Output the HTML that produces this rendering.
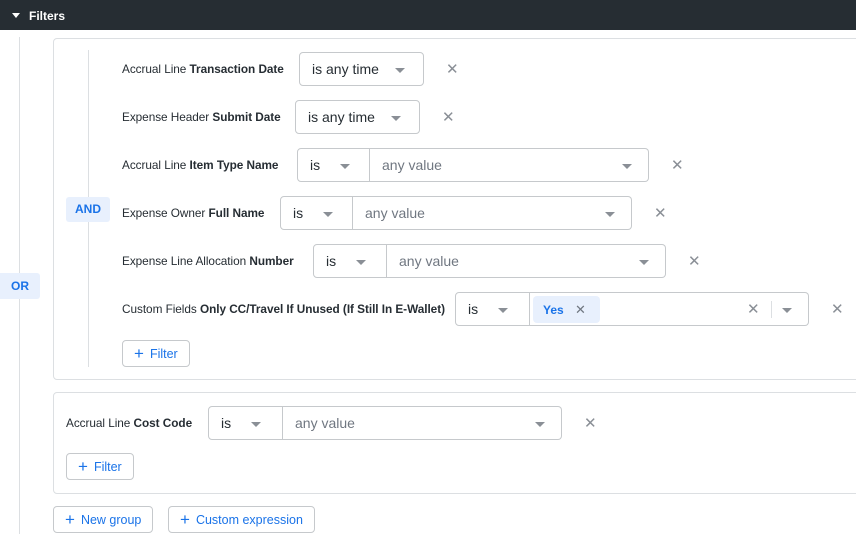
<!DOCTYPE html>
<html><head><style>
*{box-sizing:border-box;margin:0;padding:0}
body{width:856px;height:545px;background:#fff;font-family:"Liberation Sans",Arial,sans-serif;position:relative;overflow:hidden;color:#262d33}
.a{position:absolute}
.hdr{left:0;top:0;width:856px;height:30px;background:#262d33;color:#fff;font-weight:bold;font-size:12px}
.lbl{font-size:11.8px;color:#262d33;height:34px;line-height:35px;white-space:nowrap;letter-spacing:-0.05px}
.lbl b{font-weight:bold}
.box{border:1px solid #c6c9cc;height:34px;font-size:14px;line-height:32px;color:#262d33;padding-left:12px;background:#fff}
.l{border-radius:4px 0 0 4px}
.r{border-radius:0 4px 4px 0;border-left:none;color:#707781}
.f{border-radius:4px}
.car{position:absolute;top:15px;width:0;height:0;border-left:5px solid transparent;border-right:5px solid transparent;border-top:5px solid #8a8f96}
.x{font-size:15px;color:#8a8f96;line-height:36px;height:34px}
.btn{border:1px solid #c6c9cc;border-radius:4px;height:27px;line-height:25px;font-size:12.5px;color:#1a73e8;padding:0 11px;background:#fff;white-space:nowrap}
.btn span{font-size:17px;margin-right:6px;vertical-align:-1px}
.chip{background:#e8f0fd;color:#1a73e8;font-weight:bold;font-size:12px}
</style></head><body>
<div class="a hdr"><span class="a" style="left:12px;top:13px;border-left:4px solid transparent;border-right:4px solid transparent;border-top:5px solid #fff"></span><span class="a" style="left:29px;top:9px">Filters</span></div>
<div class="a" style="left:19px;top:37px;width:1px;height:497px;background:#dcdfe2"></div>
<div class="a chip" style="left:0;top:273px;width:40px;height:26px;line-height:26px;text-align:center;border-radius:0 3px 3px 0">OR</div>
<div class="a" style="left:53px;top:38px;width:820px;height:342px;border:1px solid #dcdfe2;border-radius:4px"></div>
<div class="a" style="left:88px;top:50px;width:1px;height:317px;background:#dcdfe2"></div>
<div class="a chip" style="left:66px;top:197px;width:44px;height:25px;line-height:25px;text-align:center;border-radius:3px">AND</div>

<div class="a lbl" style="left:122px;top:52px">Accrual Line <b>Transaction Date</b></div>
<div class="a box f" style="left:299px;top:52px;width:125px">is any time<i class="car" style="left:95px"></i></div>
<div class="a x" style="left:446px;top:52px">✕</div>

<div class="a lbl" style="left:122px;top:100px">Expense Header <b>Submit Date</b></div>
<div class="a box f" style="left:295px;top:100px;width:125px">is any time<i class="car" style="left:95px"></i></div>
<div class="a x" style="left:442px;top:100px">✕</div>

<div class="a lbl" style="left:122px;top:148px">Accrual Line <b>Item Type Name</b></div>
<div class="a box l" style="left:297px;top:148px;width:73px">is<i class="car" style="left:42px"></i></div>
<div class="a box r" style="left:370px;top:148px;width:279px">any value<i class="car" style="left:252px"></i></div>
<div class="a x" style="left:671px;top:148px">✕</div>

<div class="a lbl" style="left:122px;top:196px">Expense Owner <b>Full Name</b></div>
<div class="a box l" style="left:280px;top:196px;width:73px">is<i class="car" style="left:42px"></i></div>
<div class="a box r" style="left:353px;top:196px;width:279px">any value<i class="car" style="left:252px"></i></div>
<div class="a x" style="left:654px;top:196px">✕</div>

<div class="a lbl" style="left:122px;top:244px">Expense Line Allocation <b>Number</b></div>
<div class="a box l" style="left:313px;top:244px;width:74px">is<i class="car" style="left:42px"></i></div>
<div class="a box r" style="left:387px;top:244px;width:279px">any value<i class="car" style="left:252px"></i></div>
<div class="a x" style="left:688px;top:244px">✕</div>

<div class="a lbl" style="left:122px;top:292px">Custom Fields <b>Only CC/Travel If Unused (If Still In E-Wallet)</b></div>
<div class="a box l" style="left:455px;top:292px;width:75px">is<i class="car" style="left:42px"></i></div>
<div class="a box r" style="left:530px;top:292px;width:279px"><i class="car" style="left:252px"></i>
<div class="a chip" style="left:3px;top:3px;width:67px;height:27px;line-height:27px;border-radius:4px;padding-left:10px">Yes <span style="font-weight:normal;color:#707781;margin-left:8px;font-size:13px">✕</span></div>
<span class="a x" style="left:217px;top:-1px">✕</span><span class="a" style="left:241px;top:8px;width:1px;height:17px;background:#dcdfe2"></span></div>
<div class="a x" style="left:831px;top:292px">✕</div>

<div class="a btn" style="left:122px;top:340px"><span>+</span>Filter</div>

<div class="a" style="left:53px;top:392px;width:820px;height:102px;border:1px solid #dcdfe2;border-radius:4px"></div>
<div class="a lbl" style="left:66px;top:406px">Accrual Line <b>Cost Code</b></div>
<div class="a box l" style="left:208px;top:406px;width:75px">is<i class="car" style="left:42px"></i></div>
<div class="a box r" style="left:283px;top:406px;width:279px">any value<i class="car" style="left:252px"></i></div>
<div class="a x" style="left:584px;top:406px">✕</div>
<div class="a btn" style="left:66px;top:453px"><span>+</span>Filter</div>

<div class="a btn" style="left:53px;top:506px"><span>+</span>New group</div>
<div class="a btn" style="left:168px;top:506px"><span>+</span>Custom expression</div>
</body></html>
